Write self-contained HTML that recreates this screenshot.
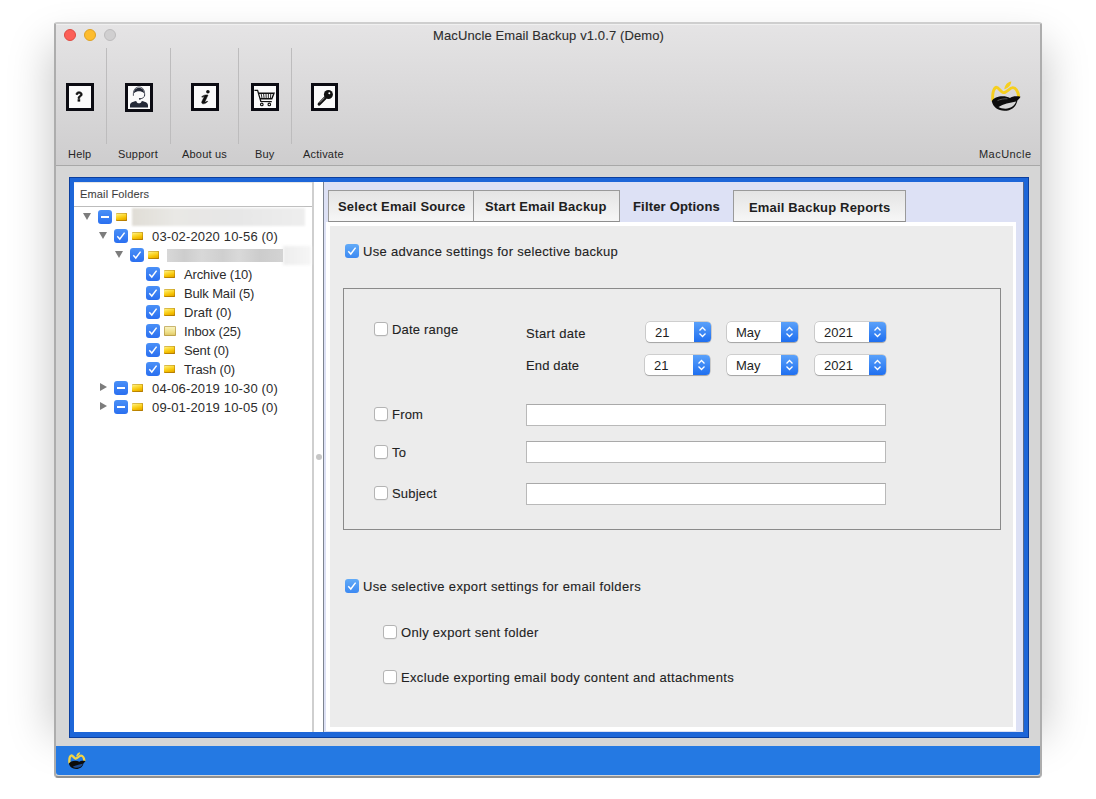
<!DOCTYPE html>
<html><head><meta charset="utf-8">
<style>
*{box-sizing:border-box;margin:0;padding:0}
html,body{width:1096px;height:799px;overflow:hidden;background:#fff}
body{position:relative;font-family:"Liberation Sans",sans-serif;color:#222}
.a{position:absolute}
.t{position:absolute;white-space:nowrap;font-size:13px;line-height:16px;color:#222;margin-top:1px;-webkit-text-stroke:0.1px #222}
#shadow{left:56px;top:50px;width:984px;height:680px;background:#ccc;box-shadow:0 0 40px 6px rgba(0,0,0,0.21)}
#win{left:54px;top:22px;width:988px;height:756px;border-radius:3px 3px 4px 4px;overflow:hidden;background:#d6d6d6;border-left:2px solid #adadad;border-right:2px solid #adadad;border-top:2px solid #cecece;border-bottom:2px solid #909090}
#tb{left:0;top:0;width:984px;height:142px;background:linear-gradient(#e5e4e5,#cecdce);border-bottom:1px solid #a8a8a8;box-shadow:inset 0 1px 0 #f0f0f0}
.dot{position:absolute;top:5px;width:12px;height:12px;border-radius:50%}
.sep{position:absolute;top:24px;width:1px;height:96px;background:#bdbcbd}
.ico{position:absolute;top:59px;width:28px;height:28px;border:3px solid #0c0c14;background:#fbfbfb}
.ico svg{position:absolute;left:0;top:0;width:22px;height:22px}
.lbl{position:absolute;top:124px;font-size:11px;line-height:13px;color:#262626;white-space:nowrap;letter-spacing:0.2px}
#status{left:0;top:722px;width:984px;height:29px;background:#2479e3;border-radius:0 0 3px 3px}
#frame{left:13px;top:153px;width:960px;height:561px;background:#1d66d8;box-shadow:inset 1px 1px 0 #0c3f9e,inset -1px -1px 0 #0c3f9e}
/* page coords from here: absolute to body */
#lp{left:74px;top:182px;width:238px;height:550px;background:#fff;border-top:2px solid #e6e6e6}
#lph{left:74px;top:183px;width:238px;height:24px;border-bottom:1px solid #bcbcbc;background:#fff}
#split{left:312px;top:182px;width:12px;height:550px;background:#fff;border-left:2px solid #cfcfcf;border-right:1px solid #7d8490}
#rp{left:324px;top:182px;width:700px;height:550px;background:#dde1f5;border-right:1px solid #5a6a8a}
#content{left:326px;top:222px;width:690px;height:509px;background:#fff}
#cbg{left:330px;top:226px;width:683px;height:501px;background:#ececec}
.tab{position:absolute;top:190px;height:32px;border:1px solid #9a9a9a;border-bottom:1px solid #8e8e8e;background:linear-gradient(#e4e4e4,#f6f6f6);font-weight:bold;font-size:13px;line-height:32px;color:#1e1e1e;white-space:nowrap;padding-left:9px;letter-spacing:0.17px}
.cb{position:absolute;width:14px;height:14px;border-radius:3px;background:linear-gradient(#4a90f7,#2a6ff0);}
.cb2{background:linear-gradient(#62abf8,#3c89f2)}
.cb svg{position:absolute;left:0;top:0;width:14px;height:14px}
.cbu{position:absolute;width:14px;height:14px;border-radius:3px;background:#fff;border:1px solid #b4b4b4;box-shadow:0 0.5px 0.5px rgba(0,0,0,0.08)}
.tri{position:absolute;width:0;height:0}
.tri.d{border-left:4.5px solid transparent;border-right:4.5px solid transparent;border-top:7px solid #7c7c7c}
.tri.r{border-top:4.5px solid transparent;border-bottom:4.5px solid transparent;border-left:7px solid #7c7c7c}
.fold{position:absolute;width:11px;height:8px;margin-top:1px;background:linear-gradient(165deg,#fff6b8 0%,#fde045 30%,#f5c000 65%,#d99a00 100%);border-radius:1px;box-shadow:inset 0 -1px 0 rgba(150,95,0,0.55),inset -1px 0 0 rgba(170,110,0,0.45),inset 0 1px 0 rgba(190,150,30,0.6)}
.blur{position:absolute;background:linear-gradient(90deg,#e4e2de,#ebebeb 40%,#e6e6e6 70%,#f0f0f0);filter:blur(1px)}
.pop{position:absolute;height:20px;border-radius:4px;background:#fff;box-shadow:0 0 0 0.5px rgba(0,0,0,0.25),0 1px 1px rgba(0,0,0,0.2);font-size:13px;line-height:22px;color:#1e1e1e;white-space:nowrap;overflow:hidden}
.pop .st{position:absolute;right:0;top:0;width:17px;height:20px;background:linear-gradient(#5aa1fa,#1f6ff0)}
.pop .st svg{position:absolute;left:3px;top:3px;width:11px;height:14px}
.fld{position:absolute;left:526px;width:360px;height:22px;background:#fff;border:1px solid #b9b9b9;border-top-color:#a9a9a9}
</style></head><body>
<div id="shadow" class="a"></div>
<div id="win" class="a">
  <div id="tb" class="a">
    <div class="dot" style="left:8px;background:#fc5f57;border:0.5px solid #de4a41"></div>
    <div class="dot" style="left:28px;background:#fdbc2e;border:0.5px solid #dea123"></div>
    <div class="dot" style="left:48px;background:#d0cfd0;border:0.5px solid #bdbcbd"></div>
    <div class="t" style="left:377px;top:3px;font-size:13px;letter-spacing:0.12px;color:#2e2e2e">MacUncle Email Backup v1.0.7 (Demo)</div>
    <div class="sep" style="left:50px"></div>
    <div class="sep" style="left:114px"></div>
    <div class="sep" style="left:182px"></div>
    <div class="sep" style="left:235px"></div>
    <svg class="a" style="left:10px;top:59px;width:28px;height:28px" viewBox="0 0 28 28"><rect x="1.5" y="1.5" width="25" height="25" fill="#fbfbfb" stroke="#0b0b12" stroke-width="3"/><g transform="translate(-0.6,-0.8)"><path d="M10.6 12.2 C10.6 10.4 11.9 9.6 13.6 9.6 C15.5 9.6 16.8 10.6 16.8 12.2 C16.8 13.6 15.8 14.2 15 14.7 C14.4 15.1 14.3 15.4 14.3 16.3 L12.6 16.3 C12.6 15.1 12.8 14.5 13.7 13.9 C14.6 13.3 15 13 15 12.3 C15 11.6 14.5 11.1 13.7 11.1 C12.9 11.1 12.4 11.6 12.4 12.4 Z" fill="#111" stroke="#111" stroke-width="0.7" stroke-linejoin="round"/><rect x="12.2" y="17" width="2.6" height="2.4" fill="#111"/></g></svg>
    <svg class="a" style="left:69px;top:59px;width:28px;height:29px" viewBox="0 0 28 29"><rect x="1.5" y="1.5" width="25" height="26" fill="#fbfbfb" stroke="#0b0b12" stroke-width="3"/><path d="M5 24.5 L5 22.3 C5 19.8 7.5 18.6 11.2 17.9 C11.6 19.4 12.6 20.2 14 20.2 C15.4 20.2 16.4 19.4 16.8 17.9 C20.5 18.6 23 19.8 23 22.3 L23 24.5 Z" fill="#252a38"/><path d="M9 10.2 C8.9 6.6 10.8 4.9 14 4.9 C17.2 4.9 19.1 6.6 19 10.2 C17.6 8.9 15.8 8.3 14 8.3 C12.2 8.3 10.4 8.9 9 10.2 Z" fill="#252a38"/><path d="M8.4 12.8 C8 7.5 10 4 14 4 C18 4 20 7.5 19.6 12.8" stroke="#252a38" stroke-width="0.8" fill="none"/><path d="M19.6 11.8 C19.6 14.2 18 15.5 15 15.8" stroke="#252a38" stroke-width="0.8" fill="none"/><circle cx="14.8" cy="15.8" r="0.9" fill="#252a38"/></svg>
    <svg class="a" style="left:135px;top:59px;width:28px;height:28px" viewBox="0 0 28 28"><rect x="1.5" y="1.5" width="25" height="25" fill="#fbfbfb" stroke="#0b0b12" stroke-width="3"/><circle cx="16.9" cy="8.7" r="1.8" fill="#111"/><path d="M10.6 13.8 C12.4 12.2 14.8 11.6 17 12 L14 18.6 C13.7 19.3 14.2 19.4 16.2 18 L16.7 18.6 C14.6 20.5 12.7 21.2 11.4 20.6 C10.5 20.1 10.6 19.2 11.1 18 L13.3 13.5 C12.3 13.6 11.6 13.9 11 14.3 Z" fill="#111" stroke="#111" stroke-width="0.5"/></svg>
    <svg class="a" style="left:195px;top:59px;width:28px;height:28px" viewBox="0 0 28 28"><rect x="1.5" y="1.5" width="25" height="25" fill="#fbfbfb" stroke="#0b0b12" stroke-width="3"/><path d="M3.4 7.3 L6.6 7.3 L9.8 18.4 L20.8 18.6" stroke="#111" stroke-width="1.3" fill="none"/><path d="M7.3 10.2 L23 10.2 L20.8 15.8 L9 15.8" stroke="#111" stroke-width="1.4" fill="none"/><path d="M10.2 10.8 L11 15.3 M12.6 10.8 L13.1 15.3 M15 10.8 L15.2 15.3 M17.4 10.8 L17.3 15.3 M19.8 10.8 L19.4 15.3" stroke="#111" stroke-width="0.9"/><circle cx="10.8" cy="21.4" r="1.3" fill="none" stroke="#111" stroke-width="1.1"/><circle cx="18.3" cy="21.4" r="1.3" fill="none" stroke="#111" stroke-width="1.1"/></svg>
    <svg class="a" style="left:255px;top:59px;width:27px;height:28px" viewBox="0 0 27 28"><rect x="1.5" y="1.5" width="24" height="25" fill="#fbfbfb" stroke="#0b0b12" stroke-width="3"/><circle cx="17.4" cy="11.5" r="4.5" fill="#111"/><circle cx="18.3" cy="10.2" r="1" fill="#fff"/><path d="M14.2 14.8 L8.2 21" stroke="#111" stroke-width="3.2" stroke-linecap="round"/><path d="M13.6 14.6 L8.8 19.6" stroke="#fff" stroke-width="0.55"/></svg>
    <div class="lbl" style="left:12px">Help</div>
    <div class="lbl" style="left:62px">Support</div>
    <div class="lbl" style="left:126px">About us</div>
    <div class="lbl" style="left:199px">Buy</div>
    <div class="lbl" style="left:247px">Activate</div>
    <div class="lbl" style="left:923px;letter-spacing:0.45px">MacUncle</div>
    <svg class="a" style="left:929px;top:52px;width:40px;height:40px" viewBox="0 0 40 40"><path d="M7.8 24 C7.2 18.5 8.3 12.5 11 11.3 C13.2 10.5 15.5 15.8 18.3 16.6 C21 17.3 24.5 11.8 27.8 11.6 C30.8 11.5 33.2 15.8 33.6 20" stroke="#f6cf1e" stroke-width="2.9" fill="none" stroke-linecap="round"/><path d="M19.3 13.2 C19.5 10 22 6.2 26.3 5.6 C26 9 23.5 12.2 19.3 13.2 Z" fill="#f6cf1e"/><path d="M6.8 25.3 C9 20.5 19 18.8 25 22 C27 20.5 31 19.8 35.6 20.8 C34.5 22.8 33.3 23.8 32.4 24.4 C31.2 31 26 34.8 19.5 34.8 C13 34.8 8 31 6.8 25.3 Z" fill="#0c0c0c"/><path d="M13.5 31 C18 28.3 25 26.6 31.2 25.6 C29.5 30 25.5 32.6 20.5 32.7 C17.5 32.7 15.3 32.1 13.5 31 Z" fill="#d5d5d5"/><path d="M12.5 24.6 C15.5 23.2 19 22.6 22.5 22.8" stroke="#8a8a8a" stroke-width="0.6" fill="none"/></svg>
  </div>
  <div id="frame" class="a"></div>
  <div id="status" class="a"><svg class="a" style="left:9px;top:3px;width:23px;height:23px" viewBox="0 0 40 40"><path d="M7.8 24 C7.2 18.5 8.3 12.5 11 11.3 C13.2 10.5 15.5 15.8 18.3 16.6 C21 17.3 24.5 11.8 27.8 11.6 C30.8 11.5 33.2 15.8 33.6 20" stroke="#f2d447" stroke-width="4" fill="none" stroke-linecap="round"/><path d="M19.3 13.2 C19.5 10 22 6.2 26.3 5.6 C26 9 23.5 12.2 19.3 13.2 Z" fill="#f2d447"/><path d="M6.8 25.3 C9 20.5 19 18.8 25 22 C27 20.5 31 19.8 35.6 20.8 C34.5 22.8 33.3 23.8 32.4 24.4 C31.2 31 26 34.8 19.5 34.8 C13 34.8 8 31 6.8 25.3 Z" fill="#0c0c0c"/><path d="M13.5 31 C18 28.3 25 26.6 31.2 25.6 C29.5 30 25.5 32.6 20.5 32.7 C17.5 32.7 15.3 32.1 13.5 31 Z" fill="#1c4a90"/></svg></div>
</div>

<div id="lp" class="a"></div>
<div id="lph" class="a"></div>
<div class="t" style="left:80px;top:186px;font-size:11px;line-height:14px;color:#4a4a4a;letter-spacing:0.15px">Email Folders</div>
<div id="split" class="a"><div style="position:absolute;left:2px;top:272px;width:6px;height:6px;border-radius:50%;background:#c6c6c6"></div></div>
<div id="rp" class="a"></div>
<div id="content" class="a"></div>
<div id="cbg" class="a"></div>

<!-- tree -->
<div id="tree">
  <div class="tri d" style="left:83px;top:213px"></div>
  <div class="cb" style="left:98px;top:210px"><svg viewBox="0 0 14 14"><rect x="3" y="6" width="8" height="2" fill="#fff"/></svg></div>
  <div class="fold" style="left:116px;top:212px"></div>
  <div class="blur" style="left:132px;top:208px;width:173px;height:18px;background:linear-gradient(90deg,#e0ddd6,#e9e8e5 25%,#e7e7e7 60%,#eeeeee);filter:blur(0.8px)"></div>

  <div class="tri d" style="left:99px;top:232px"></div>
  <div class="cb" style="left:114px;top:229px"><svg viewBox="0 0 14 14"><path d="M3.3 7.3 L5.8 10 L10.6 3.6" stroke="#fff" stroke-width="1.45" fill="none"/></svg></div>
  <div class="fold" style="left:132px;top:231px"></div>
  <div class="t" style="-webkit-text-stroke:0;color:#2c2c2c;left:152px;top:228px;letter-spacing:0.15px">03-02-2020 10-56 (0)</div>

  <div class="tri d" style="left:115px;top:251px"></div>
  <div class="cb" style="left:130px;top:248px"><svg viewBox="0 0 14 14"><path d="M3.3 7.3 L5.8 10 L10.6 3.6" stroke="#fff" stroke-width="1.45" fill="none"/></svg></div>
  <div class="fold" style="left:148px;top:250px"></div>
  <div class="blur" style="left:283px;top:246px;width:28px;height:19px;background:linear-gradient(90deg,#ededed,#f6f6f6);filter:blur(1.5px)"></div><div class="blur" style="left:167px;top:249px;width:116px;height:13px;background:linear-gradient(90deg,#d8d8d8,#cdcdcd 15%,#d8d8d8 30%,#cfcfcf 48%,#d9d9d9 62%,#cccccc 80%,#d3d3d3);filter:blur(0.6px)"></div>

  <div class="cb" style="left:146px;top:267px"><svg viewBox="0 0 14 14"><path d="M3.3 7.3 L5.8 10 L10.6 3.6" stroke="#fff" stroke-width="1.45" fill="none"/></svg></div>
  <div class="fold" style="left:164px;top:269px"></div>
  <div class="t" style="-webkit-text-stroke:0;color:#2c2c2c;left:184px;top:266px;letter-spacing:-0.15px">Archive (10)</div>

  <div class="cb" style="left:146px;top:286px"><svg viewBox="0 0 14 14"><path d="M3.3 7.3 L5.8 10 L10.6 3.6" stroke="#fff" stroke-width="1.45" fill="none"/></svg></div>
  <div class="fold" style="left:164px;top:288px"></div>
  <div class="t" style="-webkit-text-stroke:0;color:#2c2c2c;left:184px;top:285px;letter-spacing:-0.15px">Bulk Mail (5)</div>

  <div class="cb" style="left:146px;top:305px"><svg viewBox="0 0 14 14"><path d="M3.3 7.3 L5.8 10 L10.6 3.6" stroke="#fff" stroke-width="1.45" fill="none"/></svg></div>
  <div class="fold" style="left:164px;top:307px"></div>
  <div class="t" style="-webkit-text-stroke:0;color:#2c2c2c;left:184px;top:304px">Draft (0)</div>

  <div class="cb" style="left:146px;top:324px"><svg viewBox="0 0 14 14"><path d="M3.3 7.3 L5.8 10 L10.6 3.6" stroke="#fff" stroke-width="1.45" fill="none"/></svg></div>
  <div class="fold" style="left:164px;top:325px;width:12px;height:10px;background:linear-gradient(#fbf6c8,#efe08a 60%,#dcc260);box-shadow:inset 0 0 0 1px rgba(170,140,60,0.6)"></div>
  <div class="t" style="-webkit-text-stroke:0;color:#2c2c2c;left:184px;top:323px;letter-spacing:-0.15px">Inbox (25)</div>

  <div class="cb" style="left:146px;top:343px"><svg viewBox="0 0 14 14"><path d="M3.3 7.3 L5.8 10 L10.6 3.6" stroke="#fff" stroke-width="1.45" fill="none"/></svg></div>
  <div class="fold" style="left:164px;top:345px"></div>
  <div class="t" style="-webkit-text-stroke:0;color:#2c2c2c;left:184px;top:342px;letter-spacing:-0.15px">Sent (0)</div>

  <div class="cb" style="left:146px;top:362px"><svg viewBox="0 0 14 14"><path d="M3.3 7.3 L5.8 10 L10.6 3.6" stroke="#fff" stroke-width="1.45" fill="none"/></svg></div>
  <div class="fold" style="left:164px;top:364px"></div>
  <div class="t" style="-webkit-text-stroke:0;color:#2c2c2c;left:184px;top:361px;letter-spacing:-0.15px">Trash (0)</div>

  <div class="tri r" style="left:100px;top:383px"></div>
  <div class="cb" style="left:114px;top:381px"><svg viewBox="0 0 14 14"><rect x="3" y="6" width="8" height="2" fill="#fff"/></svg></div>
  <div class="fold" style="left:132px;top:383px"></div>
  <div class="t" style="-webkit-text-stroke:0;color:#2c2c2c;left:152px;top:380px;letter-spacing:0.15px">04-06-2019 10-30 (0)</div>

  <div class="tri r" style="left:100px;top:402px"></div>
  <div class="cb" style="left:114px;top:400px"><svg viewBox="0 0 14 14"><rect x="3" y="6" width="8" height="2" fill="#fff"/></svg></div>
  <div class="fold" style="left:132px;top:402px"></div>
  <div class="t" style="-webkit-text-stroke:0;color:#2c2c2c;left:152px;top:399px;letter-spacing:0.15px">09-01-2019 10-05 (0)</div>
</div>

<!-- tabs -->
<div class="tab" style="left:328px;width:146px">Select Email Source</div>
<div class="tab" style="left:473px;width:147px;padding-left:11px">Start Email Backup</div>
<div class="t" style="left:633px;top:198px;font-weight:bold;letter-spacing:0.18px;color:#1e1e1e">Filter Options</div>
<div class="tab" style="left:733px;width:173px;padding-left:15px;line-height:33px">Email Backup Reports</div>

<!-- content -->
<div class="cb cb2" style="left:345px;top:244px"><svg viewBox="0 0 14 14"><path d="M3.3 7.3 L5.8 10 L10.6 3.6" stroke="#fff" stroke-width="1.45" fill="none"/></svg></div>
<div class="t" style="left:363px;top:243px;letter-spacing:0.3px">Use advance settings for selective backup</div>

<div class="a" style="left:343px;top:288px;width:658px;height:242px;border:1px solid #8a8a8a"></div>

<div class="cbu" style="left:374px;top:322px"></div>
<div class="t" style="left:392px;top:321px;letter-spacing:0.2px">Date range</div>
<div class="t" style="left:526px;top:325px;letter-spacing:0.35px">Start date</div>
<div class="t" style="left:526px;top:357px;letter-spacing:0.15px">End date</div>

<div class="pop" style="left:646px;top:322px;width:65px"><span style="position:absolute;left:9px">21</span><div class="st"><svg viewBox="0 0 11 14"><path d="M2.5 5.5 L5.5 2.5 L8.5 5.5 M2.5 8.5 L5.5 11.5 L8.5 8.5" stroke="#fff" stroke-width="1.3" fill="none"/></svg></div></div>
<div class="pop" style="left:727px;top:322px;width:71px"><span style="position:absolute;left:9px">May</span><div class="st"><svg viewBox="0 0 11 14"><path d="M2.5 5.5 L5.5 2.5 L8.5 5.5 M2.5 8.5 L5.5 11.5 L8.5 8.5" stroke="#fff" stroke-width="1.3" fill="none"/></svg></div></div>
<div class="pop" style="left:815px;top:322px;width:71px"><span style="position:absolute;left:9px">2021</span><div class="st"><svg viewBox="0 0 11 14"><path d="M2.5 5.5 L5.5 2.5 L8.5 5.5 M2.5 8.5 L5.5 11.5 L8.5 8.5" stroke="#fff" stroke-width="1.3" fill="none"/></svg></div></div>
<div class="pop" style="left:645px;top:355px;width:65px"><span style="position:absolute;left:9px">21</span><div class="st"><svg viewBox="0 0 11 14"><path d="M2.5 5.5 L5.5 2.5 L8.5 5.5 M2.5 8.5 L5.5 11.5 L8.5 8.5" stroke="#fff" stroke-width="1.3" fill="none"/></svg></div></div>
<div class="pop" style="left:727px;top:355px;width:71px"><span style="position:absolute;left:9px">May</span><div class="st"><svg viewBox="0 0 11 14"><path d="M2.5 5.5 L5.5 2.5 L8.5 5.5 M2.5 8.5 L5.5 11.5 L8.5 8.5" stroke="#fff" stroke-width="1.3" fill="none"/></svg></div></div>
<div class="pop" style="left:815px;top:355px;width:71px"><span style="position:absolute;left:9px">2021</span><div class="st"><svg viewBox="0 0 11 14"><path d="M2.5 5.5 L5.5 2.5 L8.5 5.5 M2.5 8.5 L5.5 11.5 L8.5 8.5" stroke="#fff" stroke-width="1.3" fill="none"/></svg></div></div>

<div class="cbu" style="left:374px;top:407px"></div>
<div class="t" style="left:392px;top:406px;letter-spacing:0.2px">From</div>
<div class="fld" style="top:404px"></div>
<div class="cbu" style="left:374px;top:445px"></div>
<div class="t" style="left:392px;top:444px;letter-spacing:0.2px">To</div>
<div class="fld" style="top:441px"></div>
<div class="cbu" style="left:374px;top:486px"></div>
<div class="t" style="left:392px;top:485px;letter-spacing:0.2px">Subject</div>
<div class="fld" style="top:483px"></div>

<div class="cb cb2" style="left:345px;top:579px"><svg viewBox="0 0 14 14"><path d="M3.3 7.3 L5.8 10 L10.6 3.6" stroke="#fff" stroke-width="1.45" fill="none"/></svg></div>
<div class="t" style="left:363px;top:578px;letter-spacing:0.35px">Use selective export settings for email folders</div>
<div class="cbu" style="left:383px;top:625px"></div>
<div class="t" style="left:401px;top:624px;letter-spacing:0.3px">Only export sent folder</div>
<div class="cbu" style="left:383px;top:670px"></div>
<div class="t" style="left:401px;top:669px;letter-spacing:0.33px">Exclude exporting email body content and attachments</div>
</body></html>
